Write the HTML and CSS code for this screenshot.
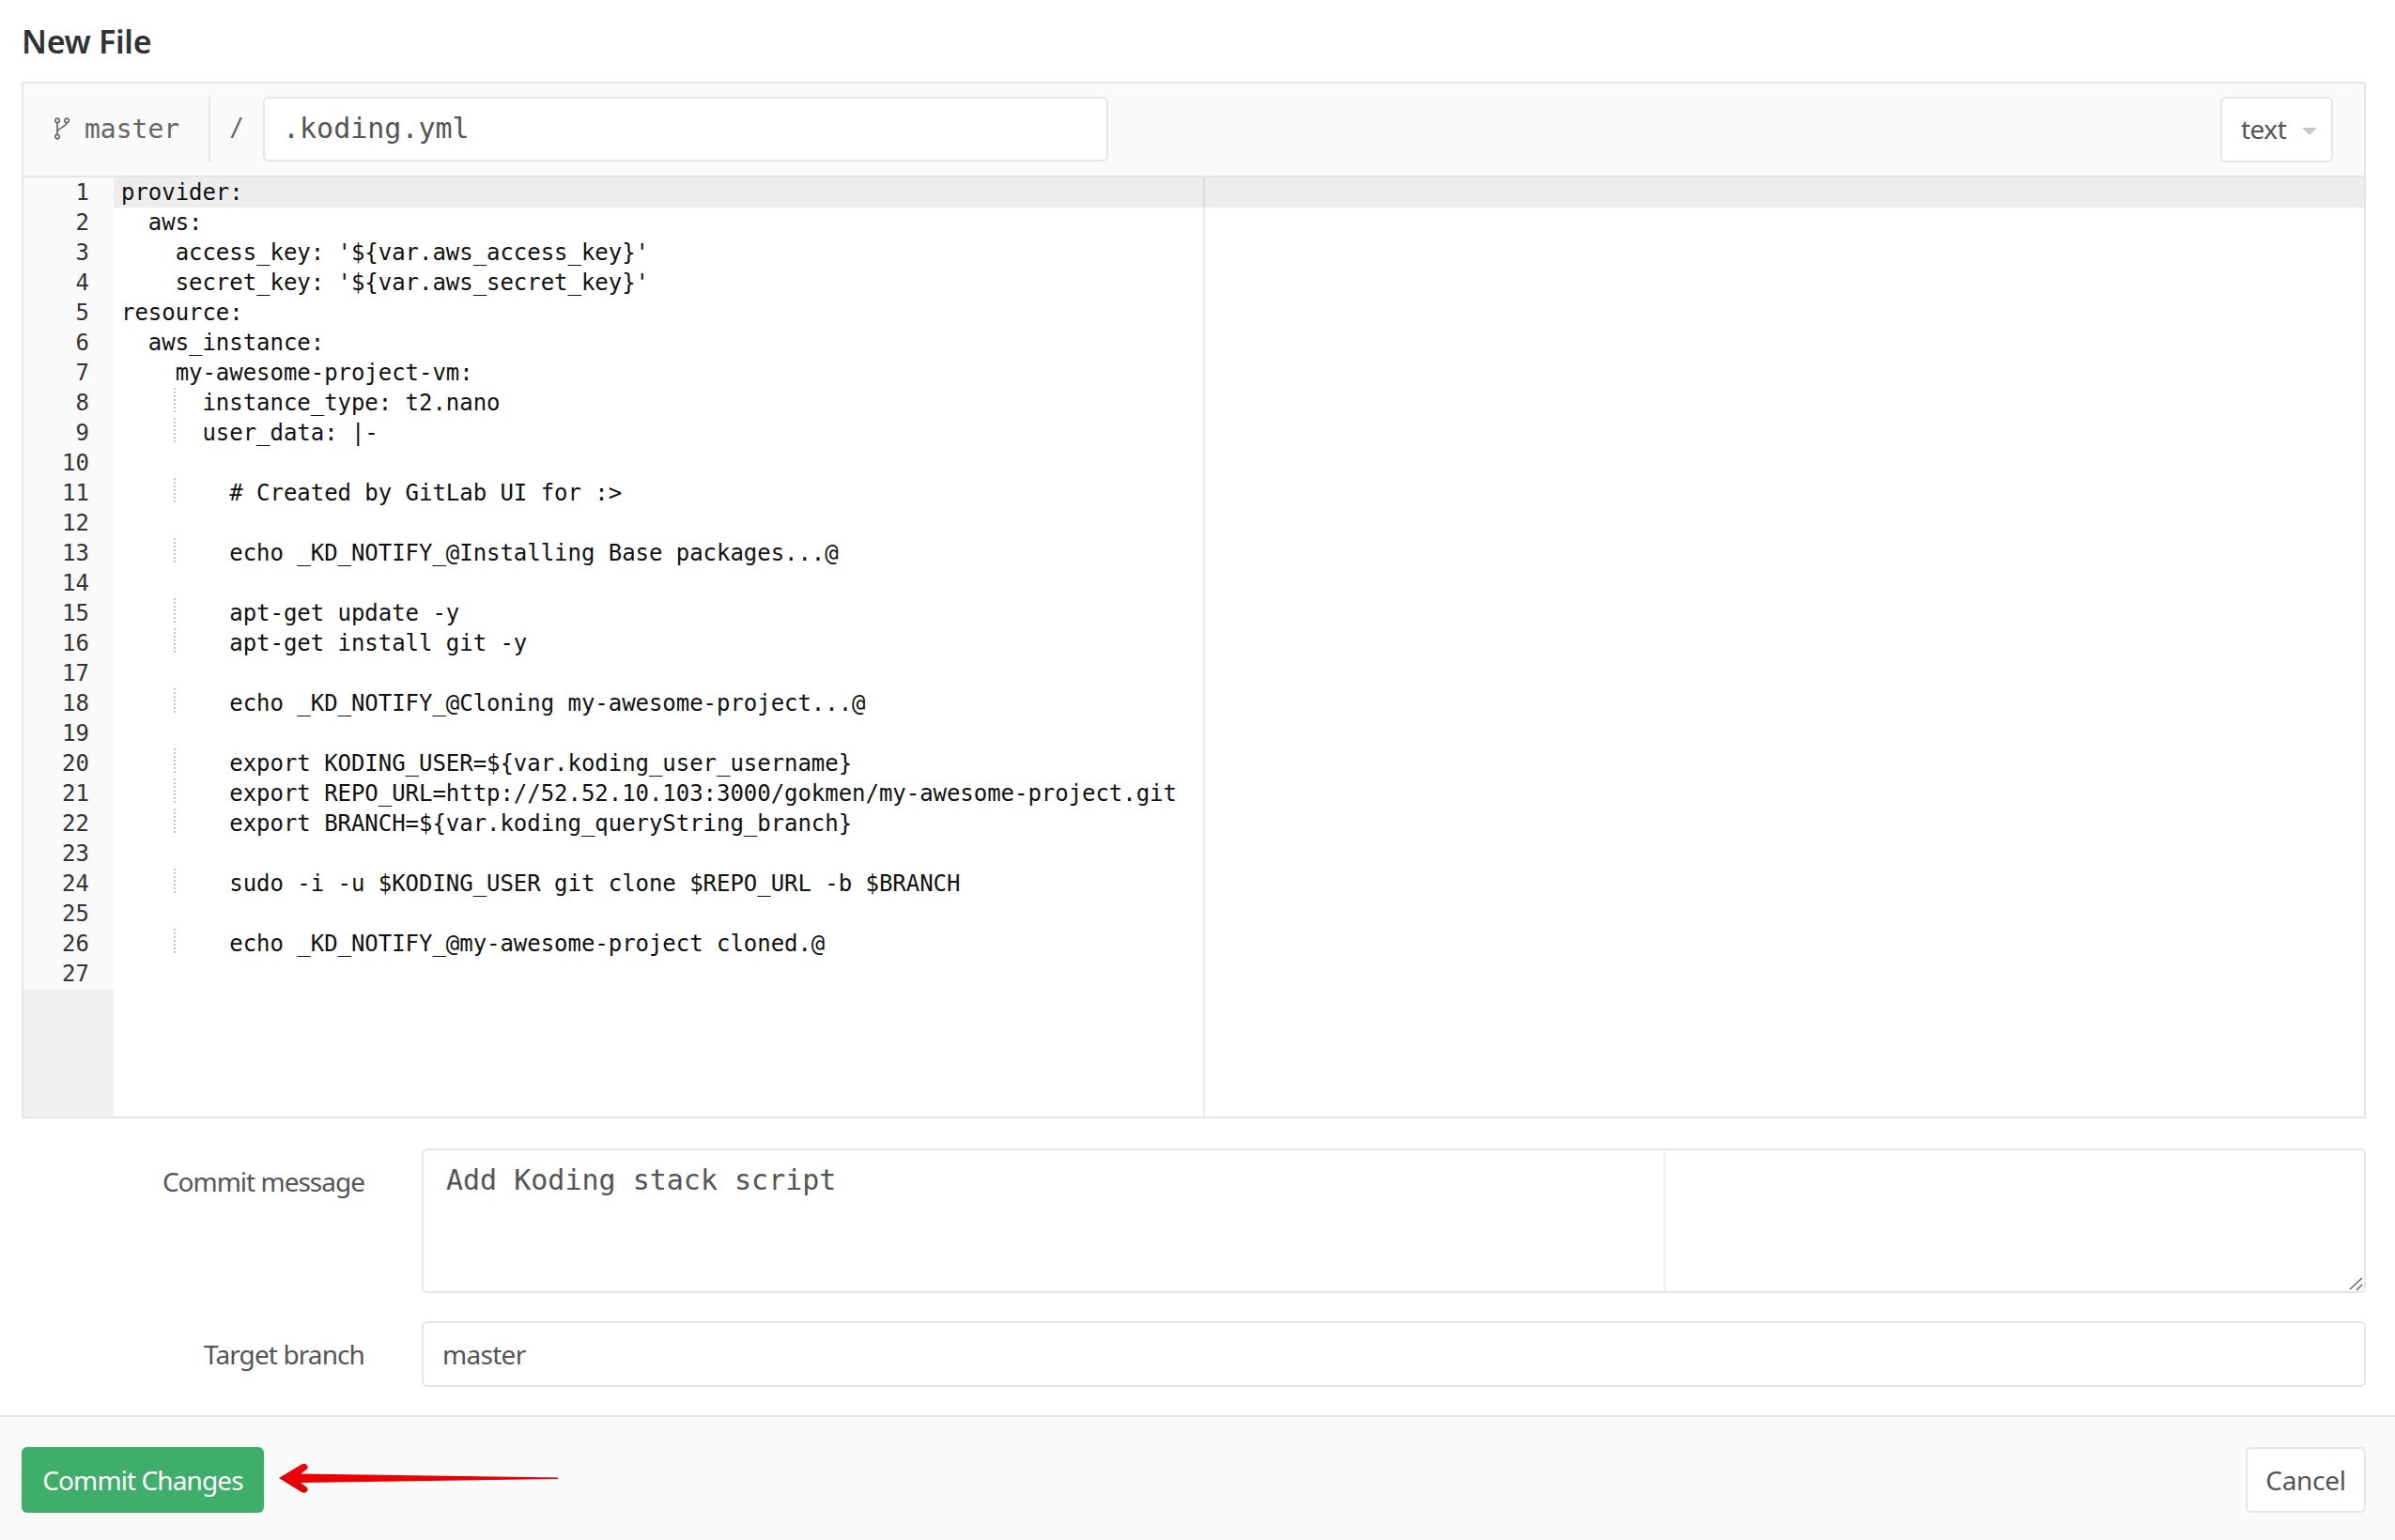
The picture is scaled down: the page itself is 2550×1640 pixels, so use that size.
FILE: index.html
```html
<!DOCTYPE html>
<html lang="en">
<head>
<meta charset="utf-8">
<title>New File</title>
<link rel="stylesheet" href="styles.css">
</head>
<body>
<main class="content">
  <h1 class="title">New File</h1>
  <section class="file-box">
    <header class="file-head">
      <div class="branch">
        <svg class="branch-icon" viewBox="0 0 18 24" width="18" height="24" aria-hidden="true"><g fill="none" stroke="#666" stroke-width="1.7"><circle cx="4" cy="3.4" r="2.2"/><circle cx="14" cy="3.4" r="2.2"/><circle cx="4" cy="20.6" r="2.2"/><path d="M4 5.6V18.4M14 5.6C14 10 5 11 4 15.5"/></g></svg>
        <span>master</span>
      </div>
      <span class="slash">/</span>
      <div class="file-name">.koding.yml</div>
      <div class="mode">text<i class="caret"></i></div>
    </header>
    <div class="editor">
      <div class="gutter">
        <div class="nums"><div>1</div><div>2</div><div>3</div><div>4</div><div>5</div><div>6</div><div>7</div><div>8</div><div>9</div><div>10</div><div>11</div><div>12</div><div>13</div><div>14</div><div>15</div><div>16</div><div>17</div><div>18</div><div>19</div><div>20</div><div>21</div><div>22</div><div>23</div><div>24</div><div>25</div><div>26</div><div>27</div></div>
      </div>
      <div class="code">
        <div class="line active">provider:</div>
        <div class="line">  aws:</div>
        <div class="line">    access_key: '${var.aws_access_key}'</div>
        <div class="line">    secret_key: '${var.aws_secret_key}'</div>
        <div class="line">resource:</div>
        <div class="line">  aws_instance:</div>
        <div class="line">    my-awesome-project-vm:</div>
        <div class="line guide">      instance_type: t2.nano</div>
        <div class="line guide">      user_data: |-</div>
        <div class="line"></div>
        <div class="line guide">        # Created by GitLab UI for :&gt;</div>
        <div class="line"></div>
        <div class="line guide">        echo _KD_NOTIFY_@Installing Base packages...@</div>
        <div class="line"></div>
        <div class="line guide">        apt-get update -y</div>
        <div class="line guide">        apt-get install git -y</div>
        <div class="line"></div>
        <div class="line guide">        echo _KD_NOTIFY_@Cloning my-awesome-project...@</div>
        <div class="line"></div>
        <div class="line guide">        export KODING_USER=${var.koding_user_username}</div>
        <div class="line guide">        export REPO_URL=http://52.52.10.103:3000/gokmen/my-awesome-project.git</div>
        <div class="line guide">        export BRANCH=${var.koding_queryString_branch}</div>
        <div class="line"></div>
        <div class="line guide">        sudo -i -u $KODING_USER git clone $REPO_URL -b $BRANCH</div>
        <div class="line"></div>
        <div class="line guide">        echo _KD_NOTIFY_@my-awesome-project cloned.@</div>
        <div class="line"></div>
        <div class="print-margin"></div>
      </div>
    </div>
  </section>
  <form class="form">
    <label class="label" for="msg">Commit message</label>
    <div class="message-wrap">
      <textarea class="message" id="msg">Add Koding stack script</textarea>
      <div class="message-margin"></div>
      <svg class="grip" viewBox="0 0 16 16" width="16" height="16" aria-hidden="true"><path d="M1 14L14 2M8 15L14 9" fill="none" stroke="#666" stroke-width="1.6"/></svg>
    </div>
    <label class="label label-mid">Target branch</label>
    <div class="text-field">master</div>
  </form>
</main>
<footer class="actions">
  <div class="btn btn-green">Commit Changes</div>
  <svg class="arrow" viewBox="0 0 310 50" width="310" height="50" aria-hidden="true">
    <defs><linearGradient id="red" x1="0" y1="0" x2="0" y2="1"><stop offset="0" stop-color="#f70008"/><stop offset="1" stop-color="#dc0000"/></linearGradient></defs>
    <path fill="url(#red)" d="M7 24L31 9.5Q35 7.5 37 10.5Q39 14 35 16L30 19.5L304 23.4V25L30 29L35 32.5Q39 35 37 38Q35 41 31 39Z"/>
  </svg>
  <div class="btn btn-cancel">Cancel</div>
</footer>
</body>
</html>
```
FILE: styles.css
```css
* { box-sizing: border-box; }
html, body { margin: 0; padding: 0; }
body {
  width: 2550px;
  height: 1640px;
  overflow: hidden;
  display: flex;
  flex-direction: column;
  background: #fff;
  color: #555;
  font-family: "Noto Sans", "Liberation Sans", sans-serif;
  font-size: 28px;
}
.content { padding: 0 31px 0 23px; flex: none; }
.title {
  margin: 0;
  height: 87px;
  padding: 22px 0 0;
  font-size: 34px;
  line-height: 44px;
  font-weight: 600;
  letter-spacing: -0.3px;
  color: #313236;
}
.file-box { border: 2px solid #e5e5e5; border-radius: 2px; }
.file-head {
  height: 100px;
  padding: 14px 33px 0 0;
  display: flex;
  align-items: flex-start;
  background: #fafafa;
  border-bottom: 2px solid #e5e5e5;
  font-family: "DejaVu Sans Mono", monospace;
}
.branch {
  width: 199px;
  height: 69px;
  display: flex;
  align-items: center;
  gap: 15px;
  padding-left: 32px;
  border-right: 2px solid #e5e5e5;
  color: #666;
}
.branch-icon { flex: none; margin-top: -2px; }
.slash { width: 56px; height: 69px; line-height: 66px; text-align: center; color: #666; font-size: 26px; }
.file-name {
  width: 900px;
  height: 69px;
  padding-left: 19px;
  line-height: 64px;
  font-size: 30px;
  color: #555;
  background: #fff;
  border: 2px solid #e5e5e5;
  border-radius: 6px;
}
.mode {
  margin-left: auto;
  width: 120px;
  height: 70px;
  padding: 0 0 3px 20px;
  display: flex;
  align-items: center;
  font-family: "Noto Sans", sans-serif;
  font-size: 28px;
  letter-spacing: -0.5px;
  background: #fff;
  border: 2px solid #e5e5e5;
  border-radius: 6px;
}
.caret {
  width: 0;
  height: 0;
  margin: 7px 0 0 17px;
  border-left: 8px solid transparent;
  border-right: 8px solid transparent;
  border-top: 8px solid #c8c8c8;
}
.editor { height: 1000px; display: flex; font-family: "DejaVu Sans Mono", monospace; font-size: 24px; line-height: 32px; }
.gutter { width: 96px; flex: none; background: #f0f0f0; color: #333; }
.nums { background: #fafafa; padding-right: 26px; text-align: right; }
.code { position: relative; flex: 1; color: #111; background: #fff; letter-spacing: -0.04px; }
.line {
  height: 32px;
  padding-left: 8px;
  white-space: pre;
}
.active { background: #ededed; }
.guide {
  background-image: repeating-linear-gradient(to bottom, #c4c4c4 0 2px, transparent 2px 4px);
  background-size: 2px 28px;
  background-position: 64px 0;
  background-repeat: no-repeat;
}
.print-margin {
  position: absolute;
  top: 0;
  bottom: 0;
  left: 1160px;
  width: 2px;
  background: rgba(0, 0, 0, 0.08);
}
.form {
  display: grid;
  grid-template-columns: 365px 1fr;
  column-gap: 61px;
  row-gap: 30px;
  margin-top: 32px;
}
.label {
  text-align: right;
  padding-top: 15px;
  line-height: 40px;
  letter-spacing: -1px;
}
.label-mid { padding-top: 15px; letter-spacing: -0.9px; }
.message-wrap { position: relative; height: 154px; display: flex; }
.message {
  flex: 1;
  height: 154px;
  margin: 0;
  padding: 12px 24px;
  font-family: "DejaVu Sans Mono", monospace;
  font-size: 30px;
  line-height: 40px;
  color: #555;
  background: #fff;
  border: 2px solid #e5e5e5;
  border-radius: 6px;
  outline: none;
  resize: none;
}
.message-margin {
  position: absolute;
  top: 2px;
  bottom: 2px;
  left: 1322px;
  width: 2px;
  background: #eee;
}
.grip { position: absolute; right: 2px; bottom: 2px; }
.text-field {
  height: 70px;
  padding-left: 20px;
  line-height: 66px;
  letter-spacing: -0.7px;
  background: #fff;
  border: 2px solid #e5e5e5;
  border-radius: 6px;
}
.actions {
  position: relative;
  flex: 1;
  margin-top: 30px;
  padding: 32px 31px 0 23px;
  display: flex;
  align-items: flex-start;
  justify-content: space-between;
  background: #fafafa;
  border-top: 2px solid #e5e5e5;
}
.btn {
  height: 70px;
  display: flex;
  align-items: center;
  justify-content: center;
  border-radius: 6px;
  letter-spacing: -0.9px;
}
.btn-green { width: 258px; background: #3fae6a; color: #fff; }
.btn-cancel { width: 128px; background: #fff; border: 2px solid #e5e5e5; letter-spacing: -0.3px; }
.arrow { position: absolute; left: 290px; top: 41px; }
```
